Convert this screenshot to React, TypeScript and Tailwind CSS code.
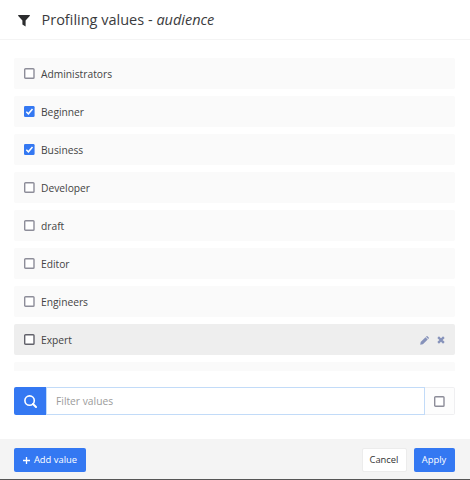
import React from "react";

const values = [
  { name: "Administrators", checked: false },
  { name: "Beginner", checked: true },
  { name: "Business", checked: true },
  { name: "Developer", checked: false },
  { name: "draft", checked: false },
  { name: "Editor", checked: false },
  { name: "Engineers", checked: false },
  { name: "Expert", checked: false, active: true },
];

function Checkbox({ checked, dark }: { checked?: boolean; dark?: boolean }) {
  return (
    <svg width="11" height="11" viewBox="0 0 11 11" className="block shrink-0">
      {checked ? (
        <>
          <rect width="10.6" height="11" rx="1.3" fill="#3478f2" />
          <path d="M2.3 5.7 4.4 7.8 8.5 3" fill="none" stroke="#fff" strokeWidth="1.5" />
        </>
      ) : (
        <rect x="0.7" y="0.7" width="9.3" height="9.6" rx="0.9" fill="#fff" stroke={dark ? "#62626b" : "#8d8d99"} strokeWidth="1.4" />
      )}
    </svg>
  );
}

function FilterIcon() {
  return (
    <svg width="12" height="12" viewBox="0 0 12 13" preserveAspectRatio="none" className="block" fill="#2b2c2e">
      <path d="M.5 0h11q.8.5.2 1.2L7.6 6v6.4L4.4 10.3V6L.3 1.2Q-.2.5.5 0Z" />
    </svg>
  );
}

function PencilIcon() {
  return (
    <svg width="9" height="9" viewBox="0 0 9 9" className="block" fill="#8692ba">
      <path d="m.2 8.8.5-2.7 4.8-4.8 2.2 2.2-4.8 4.8ZM6 .8l.5-.5q.5-.5 1 0l1.2 1.2q.5.5 0 1l-.5.5Z" />
    </svg>
  );
}

function CloseIcon() {
  return (
    <svg width="8" height="8" viewBox="0 0 7 7" className="block">
      <path d="m1 1 5 5M6 1 1 6" stroke="#8692ba" strokeWidth="2" />
    </svg>
  );
}

export default function App() {
  return (
    <div className="flex h-[480px] w-[470px] flex-col overflow-hidden bg-white font-['Open_Sans',sans-serif] text-[#444]">
      <header className="flex h-10 shrink-0 items-center border-b border-[#f4f4f4] pl-[18px]">
        <div className="pt-[2px]">
          <FilterIcon />
        </div>
        <h1 className="ml-[11.5px] pt-px text-[14.5px] leading-5 whitespace-nowrap text-[#3a3b3d]">
          Profiling values - <em>audience</em>
        </h1>
      </header>
      <main className="mt-[18px] flex h-[313px] shrink-0 flex-col gap-[7px] overflow-hidden pr-[15.5px] pl-[14px]">
        {values.map((v) => (
          <div
            key={v.name}
            className={`flex h-[31px] shrink-0 items-center rounded-[2px] pr-[9.5px] pl-[9.5px] ${v.active ? "bg-[#eeeeee]" : "bg-[#fafafa]"}`}
          >
            <Checkbox checked={v.checked} dark={v.active} />
            <span className="ml-[6.5px] text-[10.25px] leading-4">{v.name}</span>
            {v.active && (
              <div className="ml-auto flex items-center gap-2 pt-px">
                <PencilIcon />
                <CloseIcon />
              </div>
            )}
          </div>
        ))}
        <div className="h-[31px] shrink-0 rounded-[2px] bg-[#fafafa]" />
      </main>
      <div className="mt-4 mr-[15.5px] ml-[14px] flex h-7 shrink-0">
        <div className="flex w-8 items-center justify-center rounded-l-[2px] bg-[#3478f2]">
          <svg width="13" height="13" viewBox="0 0 13 13" className="block" fill="none" stroke="#fff">
            <circle cx="5.6" cy="5.6" r="4.7" strokeWidth="1.6" />
            <path d="m9 9 3 3" strokeWidth="2" strokeLinecap="round" />
          </svg>
        </div>
        <input
          className="h-7 min-w-0 flex-1 border border-[#c2dbf8] bg-white px-[9px] text-[10.25px] outline-none placeholder:text-[#9b9b9b]"
          placeholder="Filter values"
        />
        <div className="flex w-[30px] items-center justify-center rounded-r-[2px] border border-l-0 border-[#efeff1] bg-[#fdfdfd]">
          <Checkbox />
        </div>
      </div>
      <footer className="mt-6 flex h-10 shrink-0 items-center bg-[#f4f4f4] pt-[2px] pr-[15.5px] pl-[14px] text-[9.4px]">
        <button className="flex h-[24px] w-[72px] items-center justify-center gap-1 rounded-[2px] bg-[#3478f2] text-white">
          <svg width="7" height="7" viewBox="0 0 7 7" className="block">
            <path d="M3.5 0v7M0 3.5h7" stroke="#fff" strokeWidth="1.3" />
          </svg>
          Add value
        </button>
        <button className="ml-auto h-[24px] w-[45px] rounded-[2px] border border-[#ececec] bg-white text-[#333]">Cancel</button>
        <button className="ml-[7px] h-[24px] w-[41px] rounded-[2px] bg-[#3478f2] text-white">Apply</button>
      </footer>
      <div className="h-px shrink-0 bg-[#555]" />
    </div>
  );
}
